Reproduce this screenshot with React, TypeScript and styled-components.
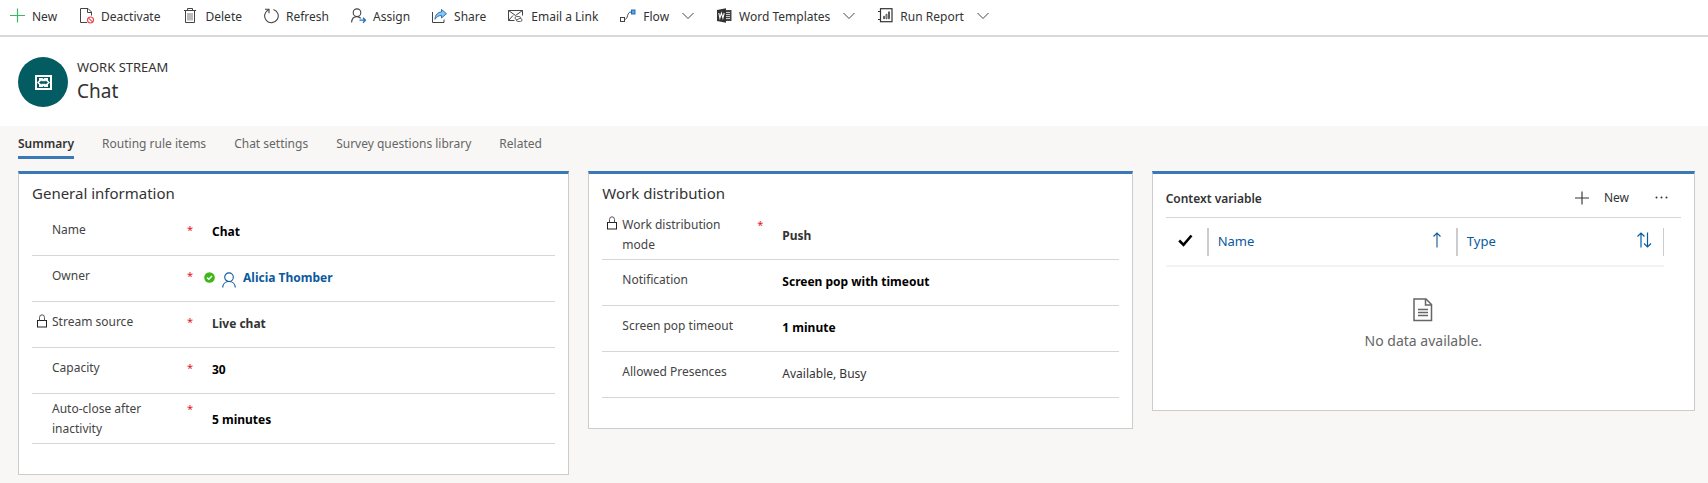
import React from "react";
import styled, { createGlobalStyle } from "styled-components";

const GlobalStyle = createGlobalStyle`
  *, *::before, *::after { box-sizing: border-box; }
  html { min-height: 100%; background: #f8f7f5; }
  body {
    margin: 0;
    font-family: "Noto Sans", "Open Sans", sans-serif;
    font-size: 12px;
    line-height: 20px;
    color: #333333;
  }
  button { font: inherit; color: inherit; background: none; border: 0; padding: 0; cursor: pointer; }
  h1, h2, p, dl, dd { margin: 0; }
  svg { display: block; flex: none; }
`;

const CommandBar = styled.div`
  display: flex;
  align-items: center;
  min-height: 37px;
  padding: 0 10px 2px;
  gap: 22px;
  background: #ffffff;
  border-bottom: 2px solid #d8d8d8;
`;

const Command = styled.button`
  display: flex;
  align-items: center;
  gap: 7px;
  white-space: nowrap;
  line-height: 20px;
`;

const Caret = styled.span`
  display: flex;
  padding: 0 1px 2px 6px;
`;

const CommandIcon = styled.span`
  display: flex;
  padding-bottom: 2px;
`;

const Header = styled.header`
  display: flex;
  align-items: center;
  gap: 9px;
  padding: 20px 18px 19px;
  background: #ffffff;
`;

const EntityBadge = styled.div`
  display: flex;
  align-items: center;
  justify-content: center;
  width: 50px;
  height: 50px;
  border-radius: 50%;
  background: #025c61;
`;

const Heading = styled.div`
  padding-bottom: 2px;
`;

const EntityName = styled.p`
  font-size: 13px;
  line-height: 20px;
`;

const RecordTitle = styled.h1`
  font-size: 19px;
  line-height: 28px;
  font-weight: 400;
`;

const Tabs = styled.nav`
  display: flex;
  gap: 28px;
  padding: 8px 18px 0;
`;

const Tab = styled.a<{ $active?: boolean }>`
  padding-bottom: 2px;
  border-bottom: 3px solid ${(p) => (p.$active ? "#3a79b7" : "transparent")};
  color: ${(p) => (p.$active ? "#333333" : "#666666")};
  font-weight: ${(p) => (p.$active ? 600 : 400)};
  text-decoration: none;
  white-space: nowrap;
`;

const Columns = styled.main`
  display: grid;
  grid-template-columns: 551fr 544fr 543fr;
  align-items: start;
  gap: 19px;
  padding: 12px 13px 9px 18px;
`;

const Card = styled.section`
  min-width: 0;
  padding: 8px 13px 30px;
  background: #ffffff;
  border: 1px solid #cccccc;
  border-top: 3px solid #3a79b7;
`;

const CardTitle = styled.h2`
  font-size: 15px;
  line-height: 22px;
  font-weight: 400;
`;

const FieldList = styled.dl`
  padding-top: 6px;
`;

const Field = styled.div<{ $tall?: boolean }>`
  display: grid;
  grid-template-columns: 20px 120px 16px 1fr;
  align-items: center;
  min-height: ${(p) => (p.$tall ? 50 : 46)}px;
  border-bottom: 1px solid #d6d6d6;
`;

const LockSlot = styled.span<{ $top?: boolean }>`
  display: flex;
  align-self: ${(p) => (p.$top ? "start" : "center")};
  padding: ${(p) => (p.$top ? "6px 0 0 5px" : "0 0 8px 5px")};
`;

const FieldLabel = styled.dt<{ $tall?: boolean }>`
  padding-bottom: ${(p) => (p.$tall ? 0 : 5)}px;
  color: #444444;
`;

const Required = styled.span<{ $top?: boolean }>`
  align-self: ${(p) => (p.$top ? "start" : "center")};
  padding: ${(p) => (p.$top ? "5px 0 0 15px" : "0 0 6px 15px")};
  font-size: 11px;
  color: #e81123;
`;

const FieldValue = styled.dd<{ $plain?: boolean; $dark?: boolean; $tall?: boolean }>`
  display: flex;
  align-items: center;
  gap: 7px;
  padding: ${(p) => (p.$tall ? "3px 0 0 24px" : "0 0 2px 24px")};
  color: ${(p) => (p.$dark ? "#000000" : "#333333")};
  font-weight: ${(p) => (p.$plain ? 400 : 700)};
`;

const Owner = styled.span`
  display: flex;
  align-items: center;
  gap: 7px;
  margin-left: -8px;
`;

const OwnerLink = styled.a`
  color: #0b5a9d;
  font-weight: 700;
  text-decoration: none;
`;

const GridHeader = styled.div`
  display: flex;
  align-items: center;
  min-height: 36px;
  padding-bottom: 4px;
  border-bottom: 1px solid #d6d6d6;
`;

const GridTitle = styled.h2`
  flex: 1;
  padding-top: 2px;
  font-size: 12px;
  line-height: 20px;
  font-weight: 600;
`;

const GridCommand = styled.button`
  display: flex;
  align-items: center;
  gap: 15px;
  margin-right: 26px;
`;

const MoreButton = styled.button`
  display: flex;
  align-items: center;
  width: 26px;
  height: 20px;
`;

const GridTable = styled.table`
  width: calc(100% - 17px);
  margin-top: 10px;
  border-collapse: collapse;
  table-layout: fixed;
`;

const HeadRow = styled.tr`
  border-bottom: 2px solid #f3f3f3;
`;

const HeadCell = styled.th<{ $width?: string }>`
  width: ${(p) => p.$width ?? "auto"};
  padding: 0 0 9px;
  font-size: 13px;
  font-weight: 400;
  text-align: left;
`;

const HeadInner = styled.div<{ $last?: boolean; $check?: boolean }>`
  display: flex;
  align-items: center;
  justify-content: space-between;
  height: 28px;
  padding: ${(p) => (p.$check ? "0 0 3px 12px" : p.$last ? "0 11px 2px 9px" : "0 15px 2px 9px")};
  border-right: ${(p) => (p.$last ? 1 : 2)}px solid #cccccc;
`;

const SortButton = styled.button`
  display: flex;
  flex: 1;
  align-items: center;
  justify-content: space-between;
  color: #0b5a9d;
`;

const SortIcon = styled.span`
  display: flex;
  padding-bottom: 3px;
`;

const EmptyState = styled.div`
  display: flex;
  flex-direction: column;
  align-items: center;
  gap: 8px;
  padding: 31px 0 28px;
  color: #666666;
  font-size: 14px;
  line-height: 22px;
`;

const stroke = { fill: "none", stroke: "#444444", strokeWidth: 1 };

const PlusIcon = ({ color, size = 15 }: { color: string; size?: number }) => (
  <svg width={size} height={size} viewBox="0 0 15 15" fill="none" stroke={color} strokeWidth="1.2">
    <path d="M7.5 0.5v14M0 7.5h15" />
  </svg>
);

const DeactivateIcon = () => (
  <svg width="15" height="16" viewBox="0 0 15 16" {...stroke}>
    <path d="M8 14.5H1.5V.5H9L12.5 4V7.5M8.5.5V4.5H12.5" />
    <circle cx="11.5" cy="12" r="3" stroke="#e8484f" strokeWidth="1.1" />
    <path d="M9.4 9.9l4.2 4.2" stroke="#e8484f" strokeWidth="1.1" />
  </svg>
);

const DeleteIcon = () => (
  <svg width="16" height="16" viewBox="-1 0 16 16" {...stroke}>
    <path d="M1 2.5h12M4.5 2.5V.5h5v2M2.5 2.5v12h9v-12" />
    <path d="M5 5v7.5M7 5v7.5M9 5v7.5" stroke="#777777" />
  </svg>
);

const RefreshIcon = () => (
  <svg width="15" height="16" viewBox="0 0 15 16" {...stroke} strokeWidth="1.1">
    <path d="M9.5 1.4A6.8 6.8 0 1 1 4.6 1.7" />
    <path d="M1 1.2H5V5.2" />
  </svg>
);

const AssignIcon = () => (
  <svg width="15" height="16" viewBox="0 0 15 16" {...stroke} strokeWidth="1.1">
    <circle cx="6" cy="4.7" r="3.8" />
    <path d="M.6 14.5C.8 11 3 8.6 6 8.6c1.7 0 2.8.6 3.8 1.7" />
    <path d="M8.5 12.2h6M12 9.7l2.5 2.5L12 14.7" stroke="#1f6fc0" strokeWidth="1.3" />
  </svg>
);

const ShareIcon = () => (
  <svg width="15" height="16" viewBox="0 0 15 16" {...stroke}>
    <path d="M.5 4v10.5h11.5v-3" />
    <path
      d="M9.5 1.5l5 4.2-5 4.3V7.5C6.5 7.5 4.5 8.8 3 11.3 3.2 7 5.5 4.2 9.5 4z"
      fill="#8cc4ee"
      stroke="#2b73b8"
    />
  </svg>
);

const EmailIcon = () => (
  <svg width="16" height="15" viewBox="0 0 16 15" {...stroke}>
    <path d="M6.5 12.5H.5V2.5H14.5V7.5M.5 2.5L7.5 7.5L14.5 2.5M.5 12.5L5 7.5" />
    <path
      d="M10.5 11.5H8.5a1.5 1.5 0 0 1 0-3h2.5a1.5 1.5 0 0 1 1.4 2M10.5 10.5h2a1.5 1.5 0 0 1 0 3H10a1.5 1.5 0 0 1-1.4-2"
      stroke="#666666"
    />
  </svg>
);

const FlowIcon = () => (
  <svg width="16" height="14" viewBox="0 0 16 14" {...stroke}>
    <rect x=".5" y="8.5" width="4" height="4" />
    <path d="M4.5 10.5C8.5 10.5 6.5 3 11 3" />
    <rect x="11.5" y="1" width="3.5" height="4" fill="#5aa5e8" stroke="#1f6fc0" />
  </svg>
);

const WordIcon = () => (
  <svg width="15" height="15" viewBox="0 0 15 15">
    <path d="M9 2h5.5v11H9" fill="#444444" />
    <path d="M9 4.5h4M9 6.5h4M9 8.5h4M9 10.5h4" stroke="#c8c8c8" />
    <path d="M0 2L9 .3V14.7L0 13z" fill="#333333" />
    <path d="M1.8 5l1.1 5 1.5-4.8 1.5 4.8L7.2 5" fill="none" stroke="#ffffff" strokeWidth="1.1" />
  </svg>
);

const ReportIcon = () => (
  <svg width="15" height="15" viewBox="0 0 15 15" fill="none" stroke="#333333">
    <rect x="2.5" y=".7" width="11.5" height="13" strokeWidth="1.2" />
    <path d="M0 3.5h3M0 11.5h3" />
    <path d="M5.5 10.8v-2.5h1v2.5zM8 10.8v-4.5h1v4.5zM10.5 10.8v-7h1v7z" strokeWidth=".8" />
  </svg>
);

const ChevronIcon = () => (
  <svg width="12" height="8" viewBox="0 0 12 8" {...stroke}>
    <path d="M.5 1L6 6.5 11.5 1" />
  </svg>
);

const StreamIcon = () => (
  <svg width="17" height="15" viewBox="0 0 17 15" fill="none">
    <rect x="1" y="1" width="15" height="13" stroke="#ffffff" strokeWidth="2" />
    <path
      d="M4 3H7.5L8.5 4L9.5 3H13V5.5L15 7.5L13 9.5V12H9.5L8.5 11L7.5 12H4V9.5L2 7.5L4 5.5z"
      fill="#ffffff"
    />
    <path d="M4 7.5L6.5 5.5V6.3H10.5V5.5L13 7.5L10.5 9.5V8.7H6.5V9.5z" fill="#025c61" />
  </svg>
);

const LockIcon = () => (
  <svg width="10" height="14" viewBox="0 0 10 14" fill="none" stroke="#222222">
    <rect x=".5" y="6.5" width="9" height="6.5" />
    <path d="M2.5 6.5V3.5a2.5 2.7 0 0 1 5 0V6.5" stroke="#555555" />
  </svg>
);

const PresenceIcon = () => (
  <svg width="11" height="11" viewBox="0 0 11 11" role="img" aria-label="Available">
    <circle cx="5.5" cy="5.5" r="5.3" fill="#3fb618" />
    <path d="M3 5.6l1.8 1.7L8 4" fill="none" stroke="#ffffff" strokeWidth="1.5" />
  </svg>
);

const PersonIcon = () => (
  <svg width="14" height="20" viewBox="0 -4 14 20" fill="none" stroke="#0b5a9d" strokeWidth="1.1">
    <circle cx="7" cy="5.2" r="4.3" />
    <path d="M.7 15.5C.9 12 3.5 9.5 7 9.5s6.1 2.5 6.3 6" />
  </svg>
);

const CheckIcon = () => (
  <svg width="15" height="13" viewBox="0 0 15 13" fill="none" stroke="#000000" strokeWidth="2.6">
    <path d="M1.2 6.5L5.5 10.8L13.5 1.5" />
  </svg>
);

const SortUpIcon = () => (
  <svg width="8" height="16" viewBox="0 0 8 16" fill="none" stroke="#0b5a9d" strokeWidth="1.1">
    <path d="M4 15.5V1M.5 4.5L4 1l3.5 3.5" />
  </svg>
);

const SortBothIcon = () => (
  <svg width="15" height="16" viewBox="0 0 15 16" fill="none" stroke="#0b5a9d" strokeWidth="1.2">
    <path d="M4 15.5V1M.5 4.5L4 1l3.5 3.5M10.5 .5V15M7 11.5l3.5 3.5 3.5-3.5" />
  </svg>
);

const MoreIcon = () => (
  <svg width="13" height="3" viewBox="0 0 13 3" fill="#333333">
    <circle cx="1.5" cy="1.5" r="1" />
    <circle cx="6.5" cy="1.5" r="1" />
    <circle cx="11.5" cy="1.5" r="1" />
  </svg>
);

const DocumentIcon = () => (
  <svg width="20" height="24" viewBox="0 0 20 24" fill="none" stroke="#666666" strokeWidth="1.5">
    <path d="M1 1H13L18.5 6.5V22.5H1z" />
    <path d="M12.5 1V7H18.5" />
    <path d="M5 11.5H15M5 14.5H15M5 17.5H15" />
  </svg>
);

const commands: { label: string; icon: React.ReactNode; menu?: boolean }[] = [
  { label: "New", icon: <PlusIcon color="#3fb56b" /> },
  { label: "Deactivate", icon: <DeactivateIcon /> },
  { label: "Delete", icon: <DeleteIcon /> },
  { label: "Refresh", icon: <RefreshIcon /> },
  { label: "Assign", icon: <AssignIcon /> },
  { label: "Share", icon: <ShareIcon /> },
  { label: "Email a Link", icon: <EmailIcon /> },
  { label: "Flow", icon: <FlowIcon />, menu: true },
  { label: "Word Templates", icon: <WordIcon />, menu: true },
  { label: "Run Report", icon: <ReportIcon />, menu: true },
];

const tabs = ["Summary", "Routing rule items", "Chat settings", "Survey questions library", "Related"];

interface FieldData {
  label: string;
  value: React.ReactNode;
  required?: boolean;
  locked?: boolean;
  tall?: boolean;
  plain?: boolean;
}

const generalFields: FieldData[] = [
  { label: "Name", value: "Chat", required: true },
  {
    label: "Owner",
    required: true,
    value: (
      <Owner>
        <PresenceIcon />
        <PersonIcon />
        <OwnerLink href="#owner">Alicia Thomber</OwnerLink>
      </Owner>
    ),
  },
  { label: "Stream source", value: "Live chat", required: true, locked: true },
  { label: "Capacity", value: "30", required: true },
  { label: "Auto-close after inactivity", value: "5 minutes", required: true, tall: true },
];

const distributionFields: FieldData[] = [
  { label: "Work distribution mode", value: "Push", required: true, locked: true, tall: true },
  { label: "Notification", value: "Screen pop with timeout" },
  { label: "Screen pop timeout", value: "1 minute" },
  { label: "Allowed Presences", value: "Available, Busy", plain: true },
];

const Fields = ({ items }: { items: FieldData[] }) => (
  <FieldList>
    {items.map((f) => (
      <Field key={f.label} $tall={f.tall}>
        <LockSlot $top={f.tall}>{f.locked && <LockIcon />}</LockSlot>
        <FieldLabel $tall={f.tall}>{f.label}</FieldLabel>
        <Required $top={f.tall}>{f.required && "*"}</Required>
        <FieldValue $plain={f.plain} $dark={!f.locked && !f.plain} $tall={f.tall}>
          {f.value}
        </FieldValue>
      </Field>
    ))}
  </FieldList>
);

export default function App() {
  return (
    <>
      <GlobalStyle />
      <CommandBar role="toolbar">
        {commands.map((c) => (
          <Command key={c.label} type="button">
            <CommandIcon>{c.icon}</CommandIcon>
            {c.label}
            {c.menu && (
              <Caret>
                <ChevronIcon />
              </Caret>
            )}
          </Command>
        ))}
      </CommandBar>
      <Header>
        <EntityBadge>
          <StreamIcon />
        </EntityBadge>
        <Heading>
          <EntityName>WORK STREAM</EntityName>
          <RecordTitle>Chat</RecordTitle>
        </Heading>
      </Header>
      <Tabs>
        {tabs.map((t, i) => (
          <Tab key={t} href="#" $active={i === 0}>
            {t}
          </Tab>
        ))}
      </Tabs>
      <Columns>
        <Card>
          <CardTitle>General information</CardTitle>
          <Fields items={generalFields} />
        </Card>
        <Card>
          <CardTitle>Work distribution</CardTitle>
          <Fields items={distributionFields} />
        </Card>
        <Card>
          <GridHeader>
            <GridTitle>Context variable</GridTitle>
            <GridCommand type="button">
              <PlusIcon color="#333333" size={14} />
              New
            </GridCommand>
            <MoreButton type="button" aria-label="More commands">
              <MoreIcon />
            </MoreButton>
          </GridHeader>
          <GridTable>
            <thead>
              <HeadRow>
                <HeadCell $width="43px">
                  <HeadInner $check>
                    <CheckIcon />
                  </HeadInner>
                </HeadCell>
                <HeadCell $width="50%">
                  <HeadInner>
                    <SortButton type="button">
                      Name
                      <SortIcon>
                        <SortUpIcon />
                      </SortIcon>
                    </SortButton>
                  </HeadInner>
                </HeadCell>
                <HeadCell>
                  <HeadInner $last>
                    <SortButton type="button">
                      Type
                      <SortIcon>
                        <SortBothIcon />
                      </SortIcon>
                    </SortButton>
                  </HeadInner>
                </HeadCell>
              </HeadRow>
            </thead>
          </GridTable>
          <EmptyState>
            <DocumentIcon />
            <p>No data available.</p>
          </EmptyState>
        </Card>
      </Columns>
    </>
  );
}
